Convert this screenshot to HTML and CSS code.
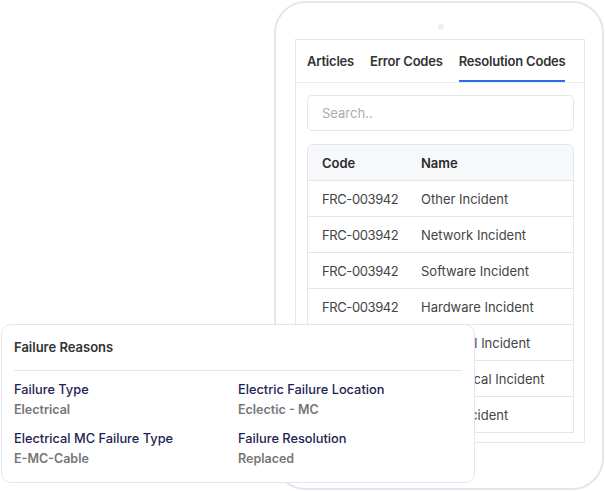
FILE: index.html
```html
<!DOCTYPE html>
<html>
<head>
<meta charset="utf-8">
<link rel="stylesheet" href="styles.css">
</head>
<body>
<div class="stage">
  <div class="tablet">
    <div class="camera"></div>
    <div class="screen">
      <div class="tabs">
        <div class="tab">Articles</div>
        <div class="tab">Error Codes</div>
        <div class="tab active">Resolution Codes</div>
      </div>
      <div class="content">
        <div class="search">Search..</div>
        <div class="table">
          <div class="row head"><span class="c1">Code</span><span>Name</span></div>
          <div class="row"><span class="c1">FRC-003942</span><span>Other Incident</span></div>
          <div class="row"><span class="c1">FRC-003942</span><span>Network Incident</span></div>
          <div class="row"><span class="c1">FRC-003942</span><span>Software Incident</span></div>
          <div class="row"><span class="c1">FRC-003942</span><span>Hardware Incident</span></div>
          <div class="row"><span class="c1">FRC-003942</span><span>Electrical Incident</span></div>
          <div class="row"><span class="c1">FRC-003942</span><span>Mechanical Incident</span></div>
          <div class="row last"><span class="c1">FRC-003942</span><span>Other Incident</span></div>
        </div>
      </div>
    </div>
  </div>
  <div class="card">
    <div class="card-title">Failure Reasons</div>
    <div class="grid">
      <div class="field"><div class="label">Failure Type</div><div class="value">Electrical</div></div>
      <div class="field"><div class="label">Electric Failure Location</div><div class="value">Eclectic - MC</div></div>
      <div class="field"><div class="label">Electrical MC Failure Type</div><div class="value">E-MC-Cable</div></div>
      <div class="field"><div class="label">Failure Resolution</div><div class="value">Replaced</div></div>
    </div>
  </div>
</div>
</body>
</html>
```
FILE: styles.css
```css
* { box-sizing: border-box; }
html, body { margin: 0; padding: 0; background: #fff; }
body { font-family: Inter, "Open Sans", sans-serif; color: #333; }
.stage { position: relative; width: 605px; height: 491px; overflow: hidden; }
.tablet {
  margin: 1px 0 0 274px;
  width: 330px;
  height: 489px;
  border: 2px solid #e3e6f1;
  border-radius: 32px;
  padding: 21px 0 0 19px;
}
.camera { width: 6px; height: 6px; border-radius: 50%; background: #eceef3; margin: 0 0 9px 143px; }
.screen {
  width: 290px;
  height: 404px;
  border: 1px solid #e5e6ea;
}
.tabs {
  display: flex;
  gap: 16px;
  height: 43px;
  padding-left: 11px;
  border-bottom: 1px solid #eceef3;
}
.tab {
  font-size: 13px;
  font-weight: 600;
  letter-spacing: -0.2px;
  color: #333;
  line-height: 40px;
  padding-top: 1px;
  border-bottom: 2px solid transparent;
}
.tab.active { border-bottom-color: #2e6be6; }
.content { padding: 12px 10px 0 11px; }
.search {
  height: 36px;
  border: 1px solid #e3e6ee;
  border-radius: 5px;
  padding-left: 14px;
  font-size: 13px;
  line-height: 34px;
  color: #a9acb4;
}
.table {
  margin-top: 13px;
  border: 1px solid #e3e6ee;
  border-radius: 6px 6px 0 0;
}
.row {
  display: flex;
  height: 36px;
  align-items: center;
  padding-left: 14px;
  font-size: 13px;
  color: #444;
  border-bottom: 1px solid #e3e6ee;
}
.row.last { border-bottom: none; height: 35px; }
.row.head { background: #f7f8fa; font-weight: 600; color: #2b2b2b; border-radius: 6px 6px 0 0; }
.c1 { width: 99px; letter-spacing: -0.4px; }
.head .c1 { letter-spacing: 0; }
.card {
  position: absolute;
  left: 1px;
  top: 324px;
  width: 474px;
  height: 159px;
  background: #fff;
  border: 1px solid #e3e6f0;
  border-radius: 10px;
  padding: 13px 12px 0 12px;
}
.card-title {
  font-size: 13px;
  font-weight: 600;
  color: #333;
  line-height: 18px;
  padding-bottom: 14px;
  border-bottom: 1px solid #e3e6f0;
}
.grid {
  display: grid;
  grid-template-columns: 224px 1fr;
  row-gap: 9px;
  padding-top: 9px;
}
.label { font-size: 12.8px; font-weight: 500; color: #1d2452; line-height: 20px; }
.value { font-size: 12.5px; font-weight: 600; color: #767676; line-height: 20px; }
```
